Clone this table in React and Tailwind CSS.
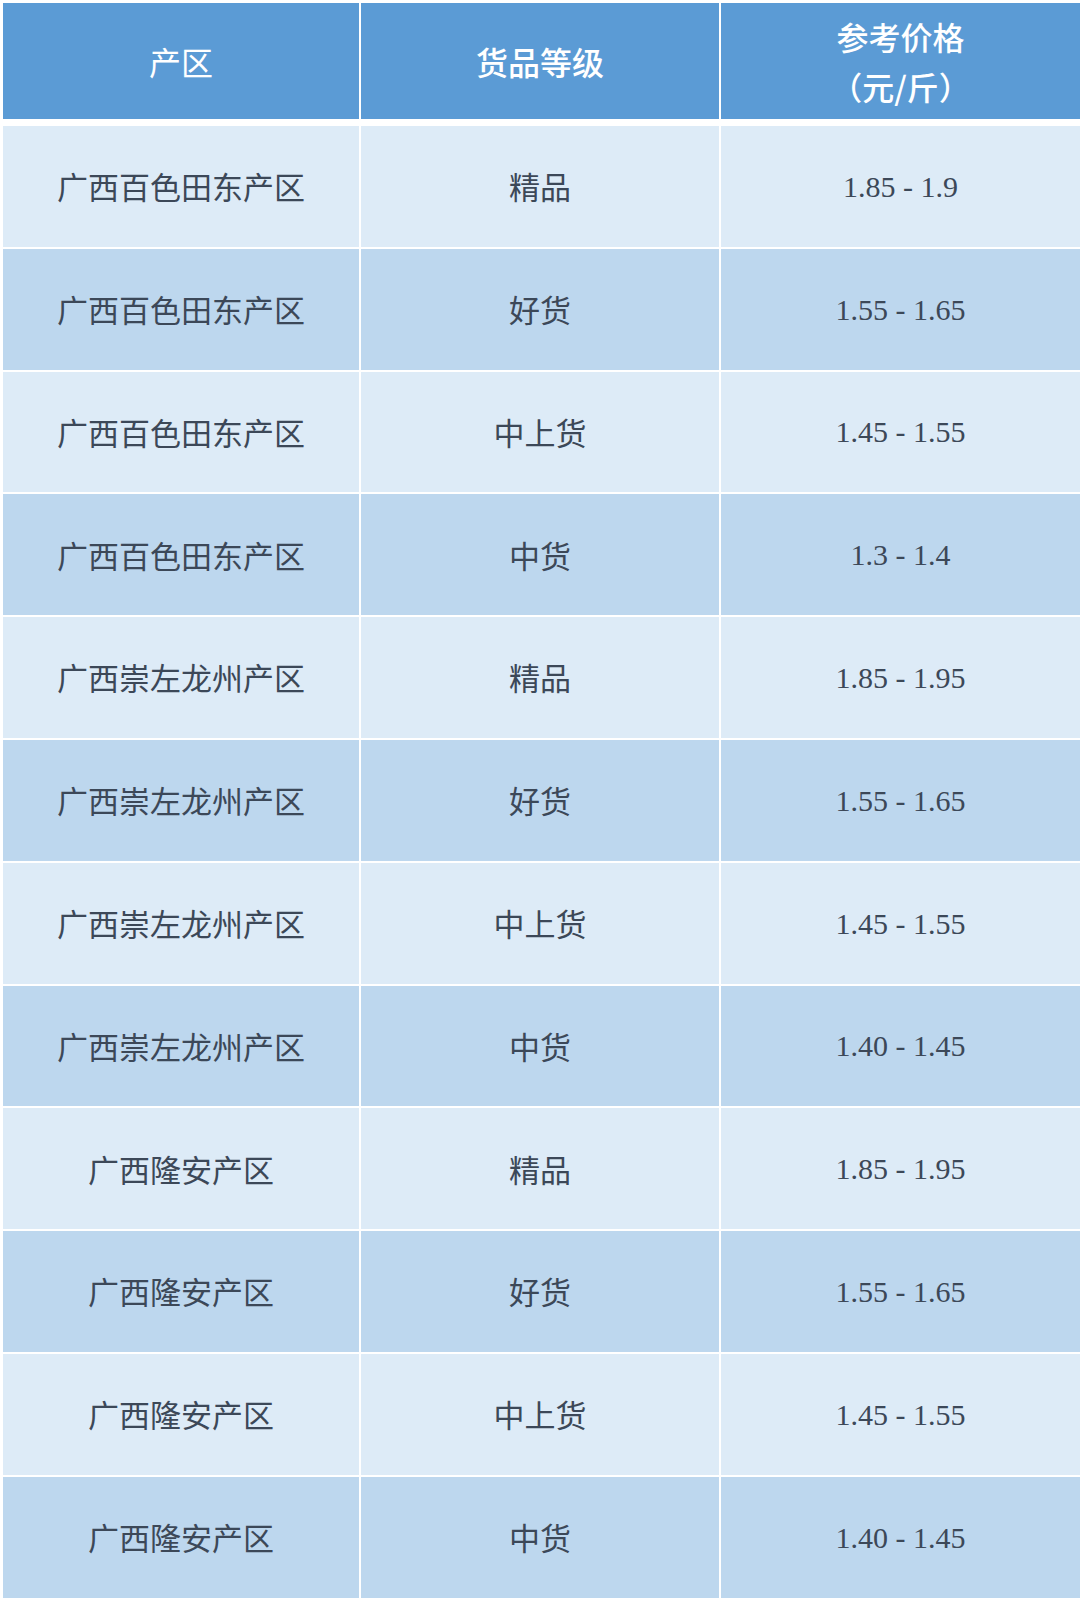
import React from "react";

const rows = [
  ["广西百色田东产区", "精品", "1.85 - 1.9"],
  ["广西百色田东产区", "好货", "1.55 - 1.65"],
  ["广西百色田东产区", "中上货", "1.45 - 1.55"],
  ["广西百色田东产区", "中货", "1.3 - 1.4"],
  ["广西崇左龙州产区", "精品", "1.85 - 1.95"],
  ["广西崇左龙州产区", "好货", "1.55 - 1.65"],
  ["广西崇左龙州产区", "中上货", "1.45 - 1.55"],
  ["广西崇左龙州产区", "中货", "1.40 - 1.45"],
  ["广西隆安产区", "精品", "1.85 - 1.95"],
  ["广西隆安产区", "好货", "1.55 - 1.65"],
  ["广西隆安产区", "中上货", "1.45 - 1.55"],
  ["广西隆安产区", "中货", "1.40 - 1.45"],
];

export default function App() {
  return (
    <div className="w-[1080px] h-[1598px] bg-white pt-[3px] pl-[3px] overflow-hidden font-['Noto_Sans_CJK_SC','Noto_Sans',sans-serif]">
      <div className="grid grid-cols-[356px_358px_1fr] gap-x-[2px] text-white text-[32px]">
        <div className="h-[116px] bg-[#5b9bd5] flex items-center justify-center">产区</div>
        <div className="h-[116px] bg-[#5b9bd5] flex items-center justify-center font-medium">货品等级</div>
        <div className="h-[116px] bg-[#5b9bd5] flex flex-col items-center justify-center font-medium leading-[50px]">
          <span>参考价格</span>
          <span>（元/斤）</span>
        </div>
      </div>
      <div className="mt-[7px] flex flex-col gap-y-[2px] text-[#3c4858]">
        {rows.map((r, i) => (
          <div
            key={i}
            className={`grid grid-cols-[356px_358px_1fr] gap-x-[2px] h-[120.8px] ${
              i % 2 === 0 ? "*:bg-[#ddebf7]" : "*:bg-[#bdd7ee]"
            }`}
          >
            <div className="flex items-center justify-center text-[31px]">{r[0]}</div>
            <div className="flex items-center justify-center text-[31px]">{r[1]}</div>
            <div className="flex items-center justify-center text-[30px] font-['Liberation_Serif','Noto_Sans_CJK_SC',serif]">
              {r[2]}
            </div>
          </div>
        ))}
      </div>
    </div>
  );
}
